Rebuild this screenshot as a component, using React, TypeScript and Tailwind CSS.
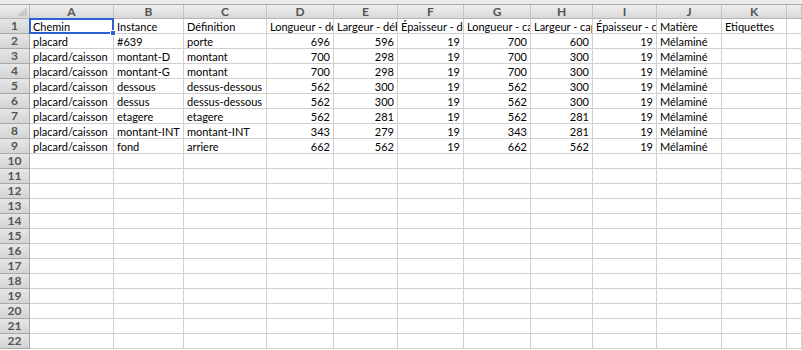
import React from "react";

const cols = ["A", "B", "C", "D", "E", "F", "G", "H", "I", "J", "K", ""];
const widths = "grid-cols-[30px_84px_70px_83px_67px_64px_66px_67px_62px_64px_65px_65px_1fr]";

type Cell = { v: string; n?: boolean };
const data: Cell[][] = [
  [{ v: "Chemin" }, { v: "Instance" }, { v: "Définition" }, { v: "Longueur - débit" }, { v: "Largeur - débit" }, { v: "Épaisseur - débit" }, { v: "Longueur - cap" }, { v: "Largeur - cap" }, { v: "Épaisseur - cap" }, { v: "Matière" }, { v: "Etiquettes" }, { v: "" }],
];
const rows: [string, string, string, string, string, string, string, string, string][] = [
  ["placard", "#639", "porte", "696", "596", "19", "700", "600", "19"],
  ["placard/caisson", "montant-D", "montant", "700", "298", "19", "700", "300", "19"],
  ["placard/caisson", "montant-G", "montant", "700", "298", "19", "700", "300", "19"],
  ["placard/caisson", "dessous", "dessus-dessous", "562", "300", "19", "562", "300", "19"],
  ["placard/caisson", "dessus", "dessus-dessous", "562", "300", "19", "562", "300", "19"],
  ["placard/caisson", "etagere", "etagere", "562", "281", "19", "562", "281", "19"],
  ["placard/caisson", "montant-INT", "montant-INT", "343", "279", "19", "343", "281", "19"],
  ["placard/caisson", "fond", "arriere", "662", "562", "19", "662", "562", "19"],
];
rows.forEach((r) => {
  data.push([
    { v: r[0] }, { v: r[1] }, { v: r[2] },
    { v: r[3], n: true }, { v: r[4], n: true }, { v: r[5], n: true },
    { v: r[6], n: true }, { v: r[7], n: true }, { v: r[8], n: true },
    { v: "Mélaminé" }, { v: "" }, { v: "" },
  ]);
});
while (data.length < 22) data.push(Array.from({ length: 12 }, () => ({ v: "" })));

export default function App() {
  return (
    <div className="w-[802px] h-[350px] overflow-hidden bg-white font-['Lato',sans-serif] text-[11px] text-black leading-none">
      <div className="h-[5px] bg-[#ececec] border-b border-[#a9a9a9]" />
      <div className={`grid ${widths} h-[14px] border-b border-[#b5b5b5] bg-gradient-to-b from-[#f0f0f0] to-[#d8d8d8]`}>
        <div className="relative border-r border-[#b5b5b5]">
          <svg className="absolute right-[2px] bottom-[2px]" width="10" height="9" viewBox="0 0 10 9">
            <polygon points="10,0 10,9 0,9" fill="#c9c9c9" />
          </svg>
        </div>
        {cols.map((c, i) => (
          <div key={i} className="flex items-center justify-center border-r border-[#c4c4c4] text-[12px] font-bold text-[#555]">
            {c}
          </div>
        ))}
      </div>
      {data.map((row, ri) => (
        <div key={ri} className={`grid ${widths} h-[15px]`}>
          <div className="flex items-center justify-center border-r border-b border-[#a8a8a8] bg-gradient-to-b from-[#e6e6e6] to-[#d4d4d4] font-bold text-[#555] text-[12px]">
            {ri + 1}
          </div>
          {row.map((cell, ci) => (
            <div
              key={ci}
              className={`relative flex items-center border-r border-b border-[#d0d0d0] whitespace-nowrap ${ri === 0 && ci === 0 ? "overflow-visible z-10" : "overflow-hidden"} ${cell.n ? "justify-end pr-[3px]" : "pl-[3px]"}`}
            >
              {cell.v}
              {ri === 0 && ci === 0 && (
                <>
                  <div className="absolute inset-[-1px] border-2 border-[#2a62d6] pointer-events-none" />
                  <div className="absolute right-[-3px] bottom-[-3px] w-[6px] h-[6px] bg-[#2a62d6] border border-white" />
                </>
              )}
            </div>
          ))}
        </div>
      ))}
    </div>
  );
}
